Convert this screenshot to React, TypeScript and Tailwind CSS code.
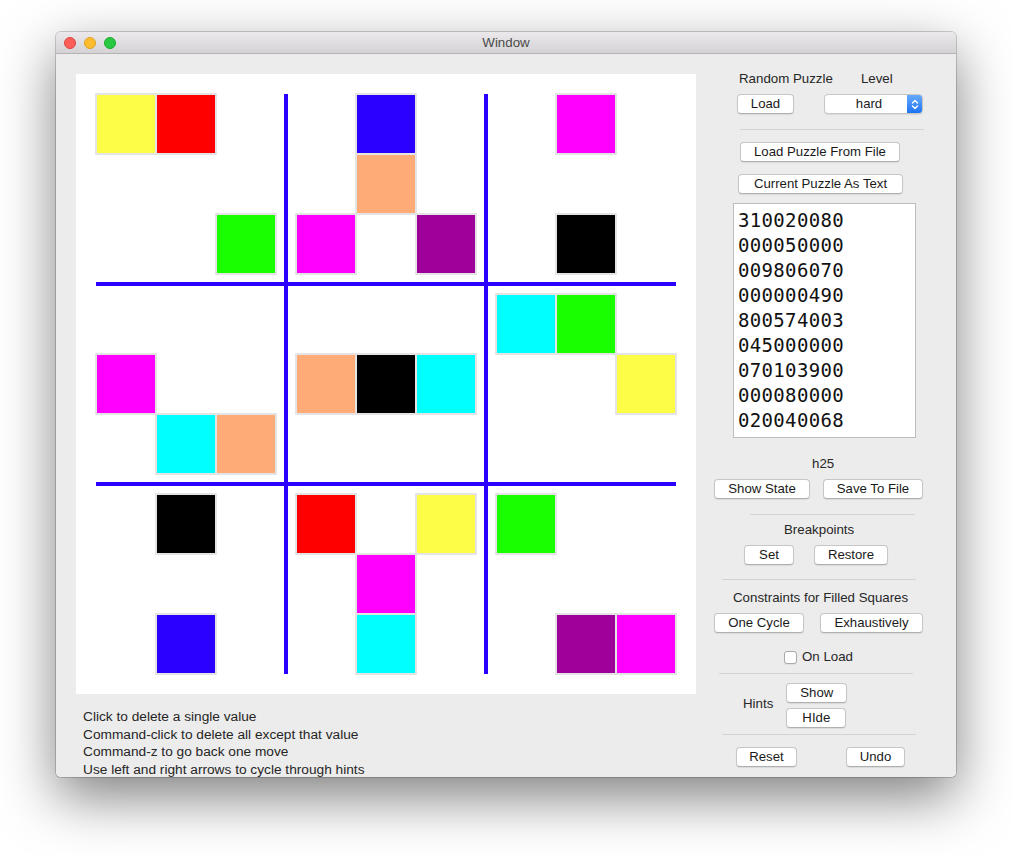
import React from 'react';

const puzzle = [
  '310020080',
  '000050000',
  '009806070',
  '000000490',
  '800574003',
  '045000000',
  '070103900',
  '000080000',
  '020040068',
];

const colors: Record<string, string> = {
  '1': 'bg-[#ff0000]',
  '2': 'bg-[#2c00ff]',
  '3': 'bg-[#fdfd48]',
  '4': 'bg-[#00ffff]',
  '5': 'bg-[#ffab78]',
  '6': 'bg-[#a0009a]',
  '7': 'bg-[#000000]',
  '8': 'bg-[#ff00ff]',
  '9': 'bg-[#19ff00]',
};

const font = { fontFamily: '"Liberation Sans", Arial, sans-serif' };

function Button({ label, className = '' }: { label: string; className?: string }) {
  return (
    <div
      className={`h-[20px] bg-white border border-[#c6c6c6] border-b-[#b0b0b0] rounded-[4px] shadow-[0_1px_1px_rgba(0,0,0,0.08)] text-[13.2px] leading-[18px] text-center text-[#1a1a1a] ${className}`}
    >
      {label}
    </div>
  );
}

function Separator({ className = '' }: { className?: string }) {
  return <div className={`h-px bg-[#d3d3d3] ${className}`} />;
}

function Board() {
  const boxes = [0, 1, 2, 3, 4, 5, 6, 7, 8];
  return (
    <div className="w-[620px] h-[620px] bg-white p-[19px]">
      <div className="relative w-[582px] h-[582px]">
        <div className="grid grid-cols-[repeat(3,180px)] grid-rows-[repeat(3,180px)] gap-[20px]">
          {boxes.map((b) => {
            const br = Math.floor(b / 3);
            const bc = b % 3;
            return (
              <div key={b} className="grid grid-cols-[repeat(3,60px)] grid-rows-[repeat(3,60px)]">
                {[0, 1, 2, 3, 4, 5, 6, 7, 8].map((c) => {
                  const r = br * 3 + Math.floor(c / 3);
                  const col = bc * 3 + (c % 3);
                  const v = puzzle[r][col];
                  return (
                    <div key={c} className="relative">
                      {v !== '0' && (
                        <div className={`absolute top-0 left-0 w-[62px] h-[62px] border-2 border-[#e4e4e4] ${colors[v]}`} />
                      )}
                    </div>
                  );
                })}
              </div>
            );
          })}
        </div>
        {/* box dividers */}
        <div className="absolute left-[189px] top-[1px] w-[4px] h-[580px] bg-[#2c00ff]" />
        <div className="absolute left-[389px] top-[1px] w-[4px] h-[580px] bg-[#2c00ff]" />
        <div className="absolute top-[189px] left-[1px] h-[4px] w-[580px] bg-[#2c00ff]" />
        <div className="absolute top-[389px] left-[1px] h-[4px] w-[580px] bg-[#2c00ff]" />
      </div>
    </div>
  );
}

function LevelSelect() {
  return (
    <div className="w-[99px] h-[20px] flex bg-white border border-[#c6c6c6] rounded-[4px] shadow-[0_1px_1px_rgba(0,0,0,0.08)] overflow-hidden">
      <div className="flex-1 text-[13.2px] leading-[18px] text-center pl-[6px] text-[#1a1a1a]">hard</div>
      <div className="w-[16px] -my-px -mr-px rounded-r-[4px] bg-gradient-to-b from-[#6aacfc] to-[#176ff0] flex items-center justify-center">
        <svg width="8" height="13" viewBox="0 0 8 13" fill="none" stroke="white" strokeWidth="1.4" strokeLinecap="round" strokeLinejoin="round">
          <path d="M1.5 5 L4 2.5 L6.5 5" />
          <path d="M1.5 8 L4 10.5 L6.5 8" />
        </svg>
      </div>
    </div>
  );
}

function RightPanel() {
  return (
    <div className="w-[260px] flex flex-col text-[13.3px] leading-[16px] text-[#262626]">
      <div className="mt-[17px] flex h-[16px]">
        <span className="ml-[43px]">Random Puzzle</span>
        <span className="ml-[28px]">Level</span>
      </div>
      <div className="mt-[7px] flex">
        <Button label="Load" className="ml-[41px] w-[57px]" />
        <div className="ml-[30px]">
          <LevelSelect />
        </div>
      </div>
      <Separator className="mt-[15px] ml-[44px] w-[184px]" />
      <Button label="Load Puzzle From File" className="mt-[12px] ml-[44px] w-[160px]" />
      <Button label="Current Puzzle As Text" className="mt-[12px] ml-[42px] w-[165px]" />
      <div
        className="mt-[9px] ml-[37px] w-[183px] h-[235px] bg-white border border-[#bdbdbd] pt-[4px] pl-[4px] text-[19px] leading-[25px] tracking-[0.34px] text-[#111]"
        style={{ fontFamily: '"DejaVu Sans Mono", "Liberation Mono", monospace' }}
      >
        {puzzle.map((row, i) => (
          <div key={i}>{row}</div>
        ))}
      </div>
      <div className="mt-[18px] h-[16px] ml-[116px]">h25</div>
      <div className="mt-[7px] flex">
        <Button label="Show State" className="ml-[18px] w-[96px]" />
        <Button label="Save To File" className="ml-[13px] w-[100px]" />
      </div>
      <Separator className="mt-[15px] ml-[54px] w-[165px]" />
      <div className="mt-[7px] h-[16px] ml-[88px]">Breakpoints</div>
      <div className="mt-[7px] flex">
        <Button label="Set" className="ml-[48px] w-[50px]" />
        <Button label="Restore" className="ml-[20px] w-[74px]" />
      </div>
      <Separator className="mt-[14px] ml-[26px] w-[194px]" />
      <div className="mt-[10px] h-[16px] ml-[37px]">Constraints for Filled Squares</div>
      <div className="mt-[7px] flex">
        <Button label="One Cycle" className="ml-[18px] w-[90px]" />
        <Button label="Exhaustively" className="ml-[16px] w-[103px]" />
      </div>
      <div className="mt-[16px] h-[16px] flex items-center">
        <div className="ml-[88px] w-[13px] h-[13px] bg-white border border-[#a9a9a9] rounded-[3px] shadow-[0_1px_1px_rgba(0,0,0,0.06)]" />
        <span className="ml-[5px]">On Load</span>
      </div>
      <Separator className="mt-[8px] ml-[23px] w-[194px]" />
      <div className="mt-[9px] flex">
        <span className="ml-[47px] mt-[13px] h-[16px]">Hints</span>
        <div className="ml-[13px] flex flex-col gap-[5px]">
          <Button label="Show" className="w-[61px]" />
          <Button label="HIde" className="w-[60px]" />
        </div>
      </div>
      <Separator className="mt-[6px] ml-[26px] w-[194px]" />
      <div className="mt-[12px] flex">
        <Button label="Reset" className="ml-[40px] w-[61px]" />
        <Button label="Undo" className="ml-[49px] w-[59px]" />
      </div>
    </div>
  );
}

export default function App() {
  return (
    <div className="w-[1012px] h-[857px] bg-white pt-[32px] pl-[56px] overflow-hidden" style={font}>
      <div className="w-[900px] h-[745px] rounded-[5px] overflow-hidden flex flex-col shadow-[0_20px_55px_rgba(0,0,0,0.5),0_0_0_1px_rgba(0,0,0,0.18)]">
        {/* title bar */}
        <div className="relative h-[22px] bg-gradient-to-b from-[#ebe9eb] to-[#d4d2d4] border-b border-[#b4b4b4] flex items-center justify-center">
          <div className="absolute left-[8px] top-[5px] flex gap-[8px]">
            <div className="w-[12px] h-[12px] rounded-full bg-[#fc5f57] border border-[#e0443e]" />
            <div className="w-[12px] h-[12px] rounded-full bg-[#fdbc2e] border border-[#dea123]" />
            <div className="w-[12px] h-[12px] rounded-full bg-[#28c840] border border-[#1aab29]" />
          </div>
          <span className="text-[13.3px] text-[#4a4a4a]">Window</span>
        </div>
        {/* content */}
        <div className="flex-1 bg-[#ececec] flex overflow-hidden">
          <div className="w-[640px] pl-[20px] pt-[20px] flex flex-col">
            <Board />
            <div className="mt-[14px] ml-[7px] text-[13.7px] leading-[17.67px] text-[#262626]">
              <div>Click to delete a single value</div>
              <div>Command-click to delete all except that value</div>
              <div>Command-z to go back one move</div>
              <div>Use left and right arrows to cycle through hints</div>
            </div>
          </div>
          <RightPanel />
        </div>
      </div>
    </div>
  );
}
